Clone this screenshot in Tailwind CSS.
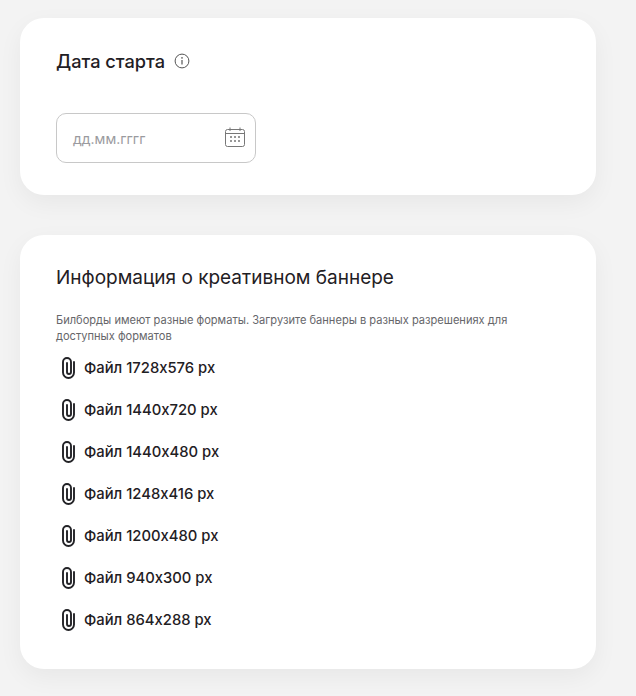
<!DOCTYPE html>
<html lang="ru">
<head>
  <meta charset="UTF-8">
  <title>Дата старта</title>
  <script src="https://cdn.jsdelivr.net/npm/@tailwindcss/browser@4"></script>
</head>
<body class="bg-[#f3f3f3] h-[696px] overflow-hidden font-['Inter','Noto_Sans',sans-serif] text-[#1f2024]">
  <div class="w-[576px] ml-5 pt-[18px] flex flex-col gap-10">
    <section class="h-[177px] bg-white rounded-3xl shadow-[0_8px_24px_rgba(0,0,0,0.05)] px-9 pt-[31px]">
      <div class="flex items-center gap-[9px] h-6">
        <h2 class="text-[18.2px] leading-6 font-medium">Дата старта</h2>
        <svg class="w-4 h-4 text-[#555]" viewBox="0 0 16 16" fill="none" stroke="currentColor">
          <circle cx="8" cy="8" r="6.9"/>
          <path d="M8 7v4.5" stroke-width="1.2"/>
          <circle cx="8" cy="4.9" r="0.8" fill="currentColor" stroke="none"/>
        </svg>
      </div>
      <div class="mt-10 w-[200px] h-[50px] border border-[#c8c8c8] rounded-[10px] flex items-center justify-between pl-4 pr-[10px]">
        <span class="text-sm text-[#9a9a9e] mt-[2px]">дд.мм.гггг</span>
        <svg class="w-5 h-5 mb-[3px] text-[#777]" viewBox="0 0 20 20" fill="none" stroke="currentColor">
          <rect x="0.5" y="2.5" width="19" height="17" rx="2"/>
          <path d="M0.5 6.5h19M5 0.5v3.5M15 0.5v3.5"/>
          <path d="M5 10h2M9 10h2M13 10h2M5 14h2M9 14h2M13 14h2" stroke-width="1.6"/>
        </svg>
      </div>
    </section>

    <section class="h-[434px] bg-white rounded-3xl shadow-[0_8px_24px_rgba(0,0,0,0.05)] px-9 pt-[31px]">
      <h2 class="text-[19px] leading-6 font-normal">Информация о креативном баннере</h2>
      <p class="mt-[22px] w-[480px] text-[11.1px] leading-4 text-[#66666a]">Билборды имеют разные форматы. Загрузите баннеры в разных разрешениях для доступных форматов</p>
      <ul class="mt-[3px] flex flex-col text-[14.8px] font-[450]">
        <li class="h-[42px] flex items-center gap-[8px] pl-[5px]"><svg class="w-[15px] h-[22px]" viewBox="0 0 15 22" fill="none" stroke="#222226" stroke-width="1.9" stroke-linecap="round"><path d="M13 5v10.5a5.5 5.5 0 0 1-11 0V5a4 4 0 0 1 8 0v10a2 2 0 0 1-4 0V6"/></svg>Файл 1728x576 px</li>
        <li class="h-[42px] flex items-center gap-[8px] pl-[5px]"><svg class="w-[15px] h-[22px]" viewBox="0 0 15 22" fill="none" stroke="#222226" stroke-width="1.9" stroke-linecap="round"><path d="M13 5v10.5a5.5 5.5 0 0 1-11 0V5a4 4 0 0 1 8 0v10a2 2 0 0 1-4 0V6"/></svg>Файл 1440x720 px</li>
        <li class="h-[42px] flex items-center gap-[8px] pl-[5px]"><svg class="w-[15px] h-[22px]" viewBox="0 0 15 22" fill="none" stroke="#222226" stroke-width="1.9" stroke-linecap="round"><path d="M13 5v10.5a5.5 5.5 0 0 1-11 0V5a4 4 0 0 1 8 0v10a2 2 0 0 1-4 0V6"/></svg>Файл 1440x480 px</li>
        <li class="h-[42px] flex items-center gap-[8px] pl-[5px]"><svg class="w-[15px] h-[22px]" viewBox="0 0 15 22" fill="none" stroke="#222226" stroke-width="1.9" stroke-linecap="round"><path d="M13 5v10.5a5.5 5.5 0 0 1-11 0V5a4 4 0 0 1 8 0v10a2 2 0 0 1-4 0V6"/></svg>Файл 1248x416 px</li>
        <li class="h-[42px] flex items-center gap-[8px] pl-[5px]"><svg class="w-[15px] h-[22px]" viewBox="0 0 15 22" fill="none" stroke="#222226" stroke-width="1.9" stroke-linecap="round"><path d="M13 5v10.5a5.5 5.5 0 0 1-11 0V5a4 4 0 0 1 8 0v10a2 2 0 0 1-4 0V6"/></svg>Файл 1200x480 px</li>
        <li class="h-[42px] flex items-center gap-[8px] pl-[5px]"><svg class="w-[15px] h-[22px]" viewBox="0 0 15 22" fill="none" stroke="#222226" stroke-width="1.9" stroke-linecap="round"><path d="M13 5v10.5a5.5 5.5 0 0 1-11 0V5a4 4 0 0 1 8 0v10a2 2 0 0 1-4 0V6"/></svg>Файл 940x300 px</li>
        <li class="h-[42px] flex items-center gap-[8px] pl-[5px]"><svg class="w-[15px] h-[22px]" viewBox="0 0 15 22" fill="none" stroke="#222226" stroke-width="1.9" stroke-linecap="round"><path d="M13 5v10.5a5.5 5.5 0 0 1-11 0V5a4 4 0 0 1 8 0v10a2 2 0 0 1-4 0V6"/></svg>Файл 864x288 px</li>
      </ul>
    </section>
  </div>
</body>
</html>
